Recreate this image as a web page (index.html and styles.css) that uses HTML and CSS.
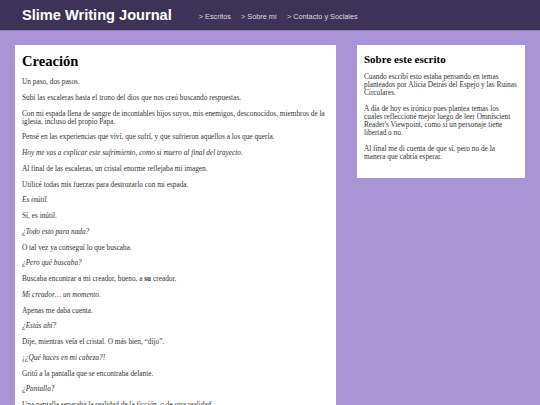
FILE: index.html
```html
<!DOCTYPE html>
<html lang="es">
<head>
<meta charset="utf-8">
<title>Slime Writing Journal</title>
<link rel="stylesheet" href="styles.css">
</head>
<body>
<header class="site-header">
  <div class="brand">Slime Writing Journal</div>
  <nav class="nav">
    <a href="#">&gt; Escritos</a>
    <a href="#">&gt; Sobre mí</a>
    <a href="#">&gt; Contacto y Sociales</a>
  </nav>
</header>
<div class="layout">
  <main class="card story">
    <h1>Creación</h1>
    <p>Un paso, dos pasos.</p>
    <p>Subí las escaleras hasta el trono del dios que nos creó buscando respuestas.</p>
    <p>Con mi espada llena de sangre de incontables hijos suyos, mis enemigos, desconocidos, miembros de la iglesia, incluso del propio Papa.</p>
    <p>Pensé en las experiencias que viví, que sufrí, y que sufrieron aquellos a los que quería.</p>
    <p><em>Hoy me vas a explicar este sufrimiento, como si muero al final del trayecto.</em></p>
    <p>Al final de las escaleras, un cristal enorme reflejaba mi imagen.</p>
    <p>Utilicé todas mis fuerzas para destrozarlo con mi espada.</p>
    <p><em>Es inútil.</em></p>
    <p>Sí, es inútil.</p>
    <p><em>¿Todo esto para nada?</em></p>
    <p>O tal vez ya conseguí lo que buscaba.</p>
    <p><em>¿Pero qué buscaba?</em></p>
    <p>Buscaba encontrar a mi creador, bueno, a <strong>su</strong> creador.</p>
    <p><em>Mi creador… un momento.</em></p>
    <p>Apenas me daba cuenta.</p>
    <p><em>¿Estás ahí?</em></p>
    <p>Dije, mientras veía el cristal. O más bien, “dijo”.</p>
    <p><em>¡¿Qué haces en mi cabeza?!</em></p>
    <p>Gritó a la pantalla que se encontraba delante.</p>
    <p><em>¿Pantalla?</em></p>
    <p>Una pantalla separaba la realidad de la ficción, o de otra realidad.</p>
  </main>
  <aside class="card side">
    <h2>Sobre este escrito</h2>
    <p>Cuando escribí esto estaba pensando en temas planteados por Alicia Detrás del Espejo y las Ruinas Circulares.</p>
    <p>A día de hoy es irónico pues plantea temas los cuales refleccioné mejor luego de leer Omniscient Reader's Viewpoint, como si un personaje tiene libertad o no.</p>
    <p>Al final me di cuenta de que sí, pero no de la manera que cabría esperar.</p>
  </aside>
</div>
</body>
</html>
```
FILE: styles.css
```css
html, body {
  margin: 0;
  padding: 0;
}
body {
  background: #a995d6;
  font-family: "Liberation Serif", "Times New Roman", serif;
  font-size: 7.3px;
  color: #333;
  height: 405px;
  overflow: hidden;
}
.site-header {
  background: #3d3357;
  height: 30px;
  border-bottom: 1px solid #8f7bbd;
  display: flex;
  align-items: center;
  padding: 0 22px;
  gap: 27px;
  font-family: "Liberation Sans", Arial, sans-serif;
}
.brand {
  color: #fff;
  font-weight: bold;
  font-size: 14.6px;
}
.nav {
  display: flex;
  gap: 10px;
  padding-top: 2px;
}
.nav a {
  color: #ddd;
  text-decoration: none;
  font-size: 7.3px;
}
.layout {
  display: grid;
  grid-template-columns: 321px 168px;
  column-gap: 21px;
  align-items: start;
  padding: 14px 15px 0;
}
.card {
  background: #fff;
  padding: 4px 7px 1px;
}
.card p {
  margin: 7.75px 0;
  line-height: 8px;
}
.story h1 {
  color: #000;
  font-size: 14.6px;
  margin: 4px 0 8px;
}
.side {
  padding-bottom: 17px;
}
.side p:last-child {
  margin-bottom: 0;
}
.side h2 {
  color: #000;
  font-size: 11px;
  margin: 4px 0 8px;
}
```
